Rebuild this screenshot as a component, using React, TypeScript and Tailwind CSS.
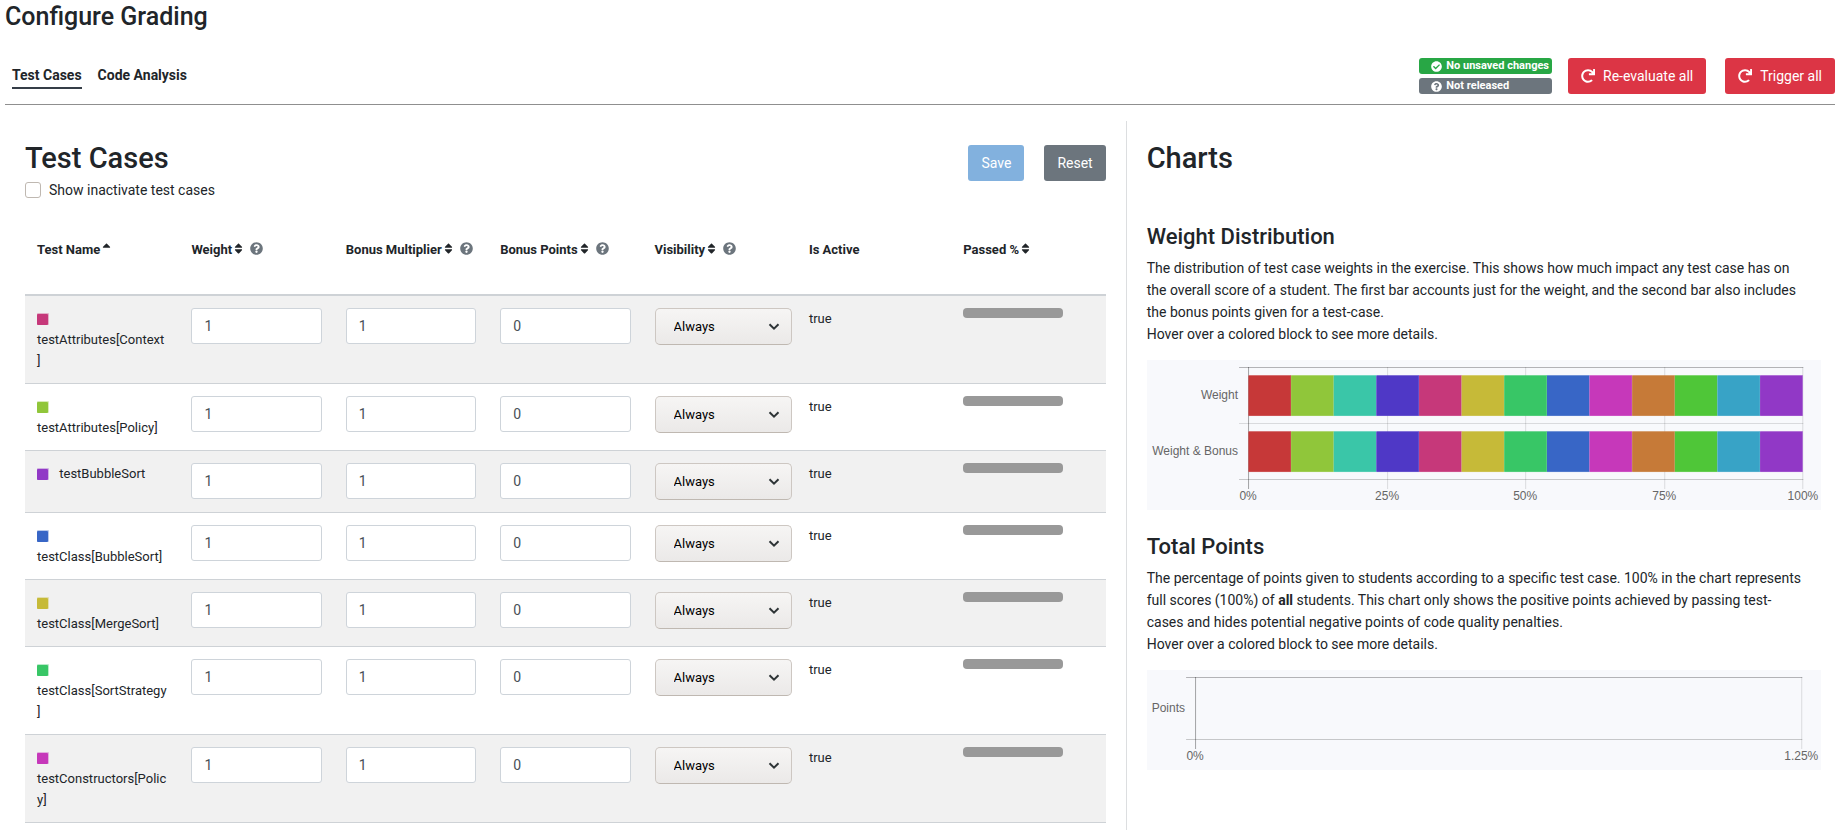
import { FaCheckCircle, FaQuestionCircle, FaRedo, FaSort, FaSortUp } from 'react-icons/fa';

type TestCase = { name: string; color: string; weight: number; multiplier: number; points: number };

const testCases: TestCase[] = [
  { name: 'testAttributes[Context]', color: '#c6387a', weight: 1, multiplier: 1, points: 0 },
  { name: 'testAttributes[Policy]', color: '#90c63a', weight: 1, multiplier: 1, points: 0 },
  { name: 'testBubbleSort', color: '#9138c6', weight: 1, multiplier: 1, points: 0 },
  { name: 'testClass[BubbleSort]', color: '#3866c6', weight: 1, multiplier: 1, points: 0 },
  { name: 'testClass[MergeSort]', color: '#c6ba38', weight: 1, multiplier: 1, points: 0 },
  { name: 'testClass[SortStrategy]', color: '#38c666', weight: 1, multiplier: 1, points: 0 },
  { name: 'testConstructors[Policy]', color: '#c638ba', weight: 1, multiplier: 1, points: 0 },
];

const columns = [
  { title: 'Test Name', sort: 'asc', help: false },
  { title: 'Weight', sort: 'both', help: true },
  { title: 'Bonus Multiplier', sort: 'both', help: true },
  { title: 'Bonus Points', sort: 'both', help: true },
  { title: 'Visibility', sort: 'both', help: true },
  { title: 'Is Active', sort: 'none', help: false },
  { title: 'Passed %', sort: 'both', help: false },
];

const barColors = [
  '#c63838', '#90c63a', '#3ac6a8', '#4f38c6', '#c6387a', '#c6ba38', '#38c666',
  '#3866c6', '#c638ba', '#c67a38', '#4fc638', '#38a3c6', '#9138c6',
];

function NumberField({ label, value }: { label: string; value: number }) {
  return (
    <input
      type="text"
      inputMode="numeric"
      aria-label={label}
      defaultValue={value}
      className="block h-9 w-full rounded-[3px] border border-[#ced4da] bg-white px-3 text-sm text-[#495057]"
    />
  );
}

function VisibilitySelect({ label }: { label: string }) {
  return (
    <div className="relative w-[137px]">
      <select
        aria-label={label}
        className="block h-[37px] w-full appearance-none rounded-[5px] border border-[#cdc7c2] border-b-[#bfb8b1] bg-linear-to-b from-[#f6f5f4] to-[#ebe9e8] px-[18px] text-[13px] text-black"
      >
        <option>Always</option>
        <option>After Due Date</option>
        <option>Never</option>
      </select>
      <svg viewBox="0 0 12 8" className="pointer-events-none absolute top-[15px] right-3 h-2 w-3" aria-hidden="true">
        <path d="M1.5 1.2 L6 5.7 L10.5 1.2" fill="none" stroke="#2e3436" strokeWidth="2" />
      </svg>
    </div>
  );
}

function WeightChart() {
  const left = 101.5;
  const width = 554;
  const step = width / barColors.length;
  return (
    <svg viewBox="0 0 674 150" className="mt-[15px] block w-full bg-[#f8f9fc]" role="img" aria-label="Weight distribution">
      <g stroke="#000" strokeOpacity="0.12">
        {[0.25, 0.5, 0.75, 1].map((t) => (
          <path key={t} d={`M${Math.floor(left + width * t) + 0.5} 7V129`} />
        ))}
        <path d="M92 63.5H656" />
      </g>
      <g stroke="#000" strokeOpacity="0.28">
        <path d="M92 7.5H656" />
        <path d="M92 119.5H656" strokeOpacity="0.2" />
        <path d="M101.5 7V129" strokeOpacity="0.35" />
      </g>
      {[15, 71].map((y) =>
        barColors.map((c, i) => (
          <g key={`${y}${c}`}>
            <rect x={left + i * step} y={y} width={step} height="41" fill={c} fillOpacity="0.7" />
            <rect x={left + i * step} y={y + 1} width={step - 0.5} height="39.5" fill={c} />
          </g>
        )),
      )}
      <g fill="#666" fontSize="12" fontFamily="'Liberation Sans', Arial, sans-serif">
        <text x="91" y="39" textAnchor="end">Weight</text>
        <text x="91" y="95" textAnchor="end">Weight &amp; Bonus</text>
        <text x="101" y="140" textAnchor="middle">0%</text>
        <text x="240" y="140" textAnchor="middle">25%</text>
        <text x="378" y="140" textAnchor="middle">50%</text>
        <text x="517" y="140" textAnchor="middle">75%</text>
        <text x="671" y="140" textAnchor="end">100%</text>
      </g>
    </svg>
  );
}

function PointsChart() {
  return (
    <svg viewBox="0 0 674 100" className="mt-[15px] block w-full bg-[#f8f9fc]" role="img" aria-label="Total points">
      <g stroke="#000">
        <path d="M39 7.5H655" strokeOpacity="0.28" />
        <path d="M39 69.5H655" strokeOpacity="0.2" />
        <path d="M48.5 7V79" strokeOpacity="0.35" />
        <path d="M654.5 7V79" strokeOpacity="0.12" />
      </g>
      <g fill="#666" fontSize="12" fontFamily="'Liberation Sans', Arial, sans-serif">
        <text x="38" y="42" textAnchor="end">Points</text>
        <text x="48" y="90" textAnchor="middle">0%</text>
        <text x="671" y="90" textAnchor="end">1.25%</text>
      </g>
    </svg>
  );
}

export default function App() {
  return (
    <div className="flex min-h-screen flex-col bg-white pr-2 pl-[5px] font-['Roboto',sans-serif] text-sm leading-[22px] text-[#212529]">
      <h1 className="text-[25px] leading-[34px] font-medium">Configure Grading</h1>

      <header className="mt-6 flex items-start justify-between border-b border-[#8f8f8f] pb-[10px]">
        <nav className="flex gap-4 pt-[6px] pl-[7px] text-sm font-bold">
          <a href="#test-cases" className="border-b-2 border-[#353d47] leading-[23px]">Test Cases</a>
          <a href="#code-analysis" className="leading-[23px]">Code Analysis</a>
        </nav>
        <div className="flex items-start">
          <div className="mr-4 flex flex-col gap-1 text-[11px] leading-4 font-bold text-white">
            <span className="flex items-center gap-1 rounded-[3px] bg-[#28a745] pr-[3px] pl-3">
              <FaCheckCircle size={11} />
              No unsaved changes
            </span>
            <span className="flex items-center gap-1 rounded-[3px] bg-[#6c757d] pr-[3px] pl-3">
              <FaQuestionCircle size={11} />
              Not released
            </span>
          </div>
          <button type="button" className="mr-[19px] flex h-9 items-center gap-2 rounded-[3px] bg-[#dc3545] px-[13px] text-white">
            <FaRedo size={14} />
            Re-evaluate all
          </button>
          <button type="button" className="flex h-9 items-center gap-2 rounded-[3px] bg-[#dc3545] px-[13px] text-white">
            <FaRedo size={14} />
            Trigger all
          </button>
        </div>
      </header>

      <main className="mt-4 grid flex-1 grid-cols-[1.58fr_1fr]">
        <section className="px-5 pt-5" id="test-cases">
          <div className="flex items-start justify-between">
            <div>
              <h2 className="text-[29px] leading-[34px] font-medium">Test Cases</h2>
              <label className="mt-1 flex items-center gap-2">
                <input type="checkbox" className="size-4 appearance-none rounded-[3px] border border-[#bfb8b1] bg-white" />
                Show inactivate test cases
              </label>
            </div>
            <div className="flex gap-5 pt-1">
              <button type="button" disabled className="h-9 rounded-[3px] bg-[#82b1de] px-[13px] text-white">Save</button>
              <button type="button" className="h-9 rounded-[3px] bg-[#6c757d] px-[13px] text-white">Reset</button>
            </div>
          </div>

          <table className="mt-[26px] w-full table-fixed border-collapse text-[13px] leading-[21px]">
            <thead>
              <tr className="border-b-2 border-[#ced2d6]">
                {columns.map((col) => (
                  <th key={col.title} scope="col" className="h-[68px] px-3 pt-3 text-left align-top font-bold whitespace-nowrap">
                    <span className="flex items-center">
                      {col.title}
                      {col.sort === 'both' && <FaSort size={13} className="mb-0.5" />}
                      {col.sort === 'asc' && <FaSortUp size={13} className="mb-0.5" />}
                      {col.help && <FaQuestionCircle size={13} className="mb-0.5 ml-[5px] text-[#6c757d]" />}
                    </span>
                  </th>
                ))}
              </tr>
            </thead>
            <tbody>
              {testCases.map((t) => (
                <tr key={t.name} className="border-b border-[#ced2d6] align-top odd:bg-[#f1f1f1]">
                  <td className="p-3 wrap-break-word">
                    <svg viewBox="0 0 12 12" className="mr-[7px] inline-block size-3 align-[-2px]" aria-hidden="true">
                      <rect width="12" height="12" rx="1" fill={t.color} fillOpacity="0.35" />
                      <rect width="11" height="11" y="1" rx="1" fill={t.color} />
                    </svg>{' '}
                    {t.name}
                  </td>
                  <td className="p-3"><NumberField label={`Weight of ${t.name}`} value={t.weight} /></td>
                  <td className="p-3"><NumberField label={`Bonus multiplier of ${t.name}`} value={t.multiplier} /></td>
                  <td className="p-3"><NumberField label={`Bonus points of ${t.name}`} value={t.points} /></td>
                  <td className="p-3"><VisibilitySelect label={`Visibility of ${t.name}`} /></td>
                  <td className="p-3">true</td>
                  <td className="p-3">
                    <div className="h-[10px] w-[100px] rounded-[4px] bg-[#999]" />
                  </td>
                </tr>
              ))}
            </tbody>
          </table>
        </section>

        <aside className="border-l border-[#dcdee0] pt-5 pr-[14px] pl-5">
          <h2 className="text-[29px] leading-[34px] font-medium">Charts</h2>
          <h3 className="mt-12 text-[22px] leading-7 font-medium">Weight Distribution</h3>
          <p className="mt-[6px] pr-4">
            The distribution of test case weights in the exercise. This shows how much impact any test case has on the
            overall score of a student. The first bar accounts just for the weight, and the second bar also includes the
            bonus points given for a test-case.
            <br />
            Hover over a colored block to see more details.
          </p>
          <WeightChart />
          <h3 className="mt-[23px] text-[22px] leading-7 font-medium">Total Points</h3>
          <p className="mt-[6px] pr-4">
            The percentage of points given to students according to a specific test case. 100% in the chart represents
            full scores (100%) of <b>all</b> students. This chart only shows the positive points achieved by passing
            test-cases and hides potential negative points of code quality penalties.
            <br />
            Hover over a colored block to see more details.
          </p>
          <PointsChart />
        </aside>
      </main>
    </div>
  );
}
